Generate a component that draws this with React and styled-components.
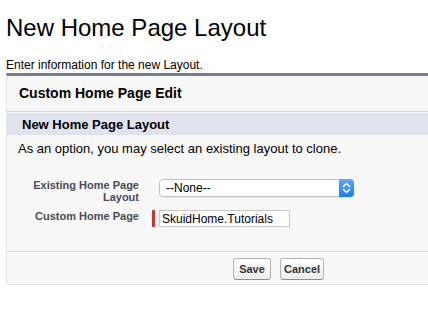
import React from "react";
import styled, { createGlobalStyle } from "styled-components";

const GlobalStyle = createGlobalStyle`
    html, body {
        margin: 0;
        padding: 0;
        background: #ffffff;
        font-family: "Liberation Sans", Arial, sans-serif;
        color: #000000;
    }
`;

const App = () => {
    return (
        <Page>
            <GlobalStyle />
            <Title>New Home Page Layout</Title>
            <Description>Enter information for the new Layout.</Description>

            <Panel>
                <PanelHeader>Custom Home Page Edit</PanelHeader>

                <SubHeader>New Home Page Layout</SubHeader>
                <Instruction>As an option, you may select an existing layout to clone.</Instruction>

                <Form>
                    <FieldRow>
                        <Label>Existing Home Page Layout</Label>
                        <FieldCell>
                            <Select>
                                <SelectText>--None--</SelectText>
                                <SelectArrow>
                                    <svg width="9" height="12" viewBox="0 0 9 12">
                                        <path d="M1.5 4.5 L4.5 1.5 L7.5 4.5 M1.5 7.5 L4.5 10.5 L7.5 7.5"
                                            fill="none" stroke="#ffffff" strokeWidth="1.6"
                                            strokeLinecap="round" strokeLinejoin="round" />
                                    </svg>
                                </SelectArrow>
                            </Select>
                        </FieldCell>
                    </FieldRow>

                    <FieldRow>
                        <Label>Custom Home Page</Label>
                        <FieldCell required>
                            <Input defaultValue="SkuidHome.Tutorials" />
                        </FieldCell>
                    </FieldRow>
                </Form>

                <ButtonBar>
                    <Button>Save</Button>
                    <Button>Cancel</Button>
                </ButtonBar>
            </Panel>
        </Page>
    )
}

const Page = styled.div`
    padding-left: 6px;
    overflow: hidden;
    width: 422px;
`;

const Title = styled.h1`
    margin: 14px 0 0 0;
    font-size: 24px;
    line-height: 28px;
    font-weight: normal;
`;

const Description = styled.p`
    margin: 16px 0 0 0;
    font-size: 12px;
    line-height: 14px;
`;

const Panel = styled.div`
    margin-top: 1px;
    width: 520px;
    background: #f8f8f8;
    border-top: 3px solid #747e96;
    border-left: 1px solid #e0e3e5;
    border-bottom: 1px solid #e0e3e5;
    border-radius: 0 0 4px 4px;
`;

const PanelHeader = styled.h2`
    margin: 0;
    padding-left: 12px;
    height: 35px;
    line-height: 35px;
    font-size: 14px;
    font-weight: bold;
    color: #000000;
    border-bottom: 1px solid #d6d6d6;
`;

const SubHeader = styled.h3`
    margin: 1px 0 0 0;
    padding: 1px 0 0 15px;
    height: 21px;
    line-height: 21px;
    font-size: 13px;
    font-weight: bold;
    color: #000000;
    background: #dfe3ee;
`;

const Instruction = styled.p`
    margin: 0;
    padding: 6px 11px 0 11px;
    font-size: 13px;
    line-height: 15px;
    color: #000000;
`;

const Form = styled.div`
    display: flex;
    flex-direction: column;
    gap: 7px;
    padding: 23px 0 24px 13px;
    border-bottom: 1px solid #dbdbdb;
`;

const FieldRow = styled.div`
    display: grid;
    grid-template-columns: 119px auto;
    column-gap: 16px;
    align-items: start;
`;

const Label = styled.label`
    text-align: right;
    font-size: 11px;
    line-height: 12px;
    font-weight: bold;
    color: #4a4a56;
`;

const FieldCell = styled.div`
    display: flex;
    padding-left: 4px;
    border-left: 3px solid ${props => props.required ? "#c23934" : "transparent"};
    margin-left: -3px;
`;

const Select = styled.div`
    display: flex;
    align-items: stretch;
    width: 195px;
    height: 18px;
    box-sizing: border-box;
    background: #ffffff;
    border: 1px solid #c4c4c4;
    border-radius: 4px;
    box-shadow: 0 1px 1px rgba(0, 0, 0, 0.08);
`;

const SelectText = styled.span`
    flex: 1;
    padding-left: 6px;
    font-size: 12px;
    line-height: 16px;
    color: #000000;
`;

const SelectArrow = styled.span`
    display: flex;
    align-items: center;
    justify-content: center;
    width: 15px;
    margin: -1px -1px -1px 0;
    border-radius: 0 4px 4px 0;
    background: linear-gradient(#5fa6ff, #1a7bf5);
`;

const Input = styled.input`
    width: 131px;
    height: 17px;
    box-sizing: border-box;
    margin: 0;
    padding: 0 2px;
    border: 1px solid #c8c8c8;
    background: #ffffff;
    font-family: "Liberation Sans", Arial, sans-serif;
    font-size: 12px;
    color: #000000;
    outline: none;
`;

const ButtonBar = styled.div`
    display: flex;
    gap: 9px;
    padding: 6px 0 4px 226px;
`;

const Button = styled.button`
    min-width: 38px;
    height: 22px;
    padding: 0 3px;
    font-family: "Liberation Sans", Arial, sans-serif;
    font-size: 11px;
    font-weight: bold;
    color: #333333;
    background: linear-gradient(#ffffff, #ececec);
    border: 1px solid #b5b5b5;
    border-bottom-color: #8f8f8f;
    border-radius: 3px;
`;

export default App;
